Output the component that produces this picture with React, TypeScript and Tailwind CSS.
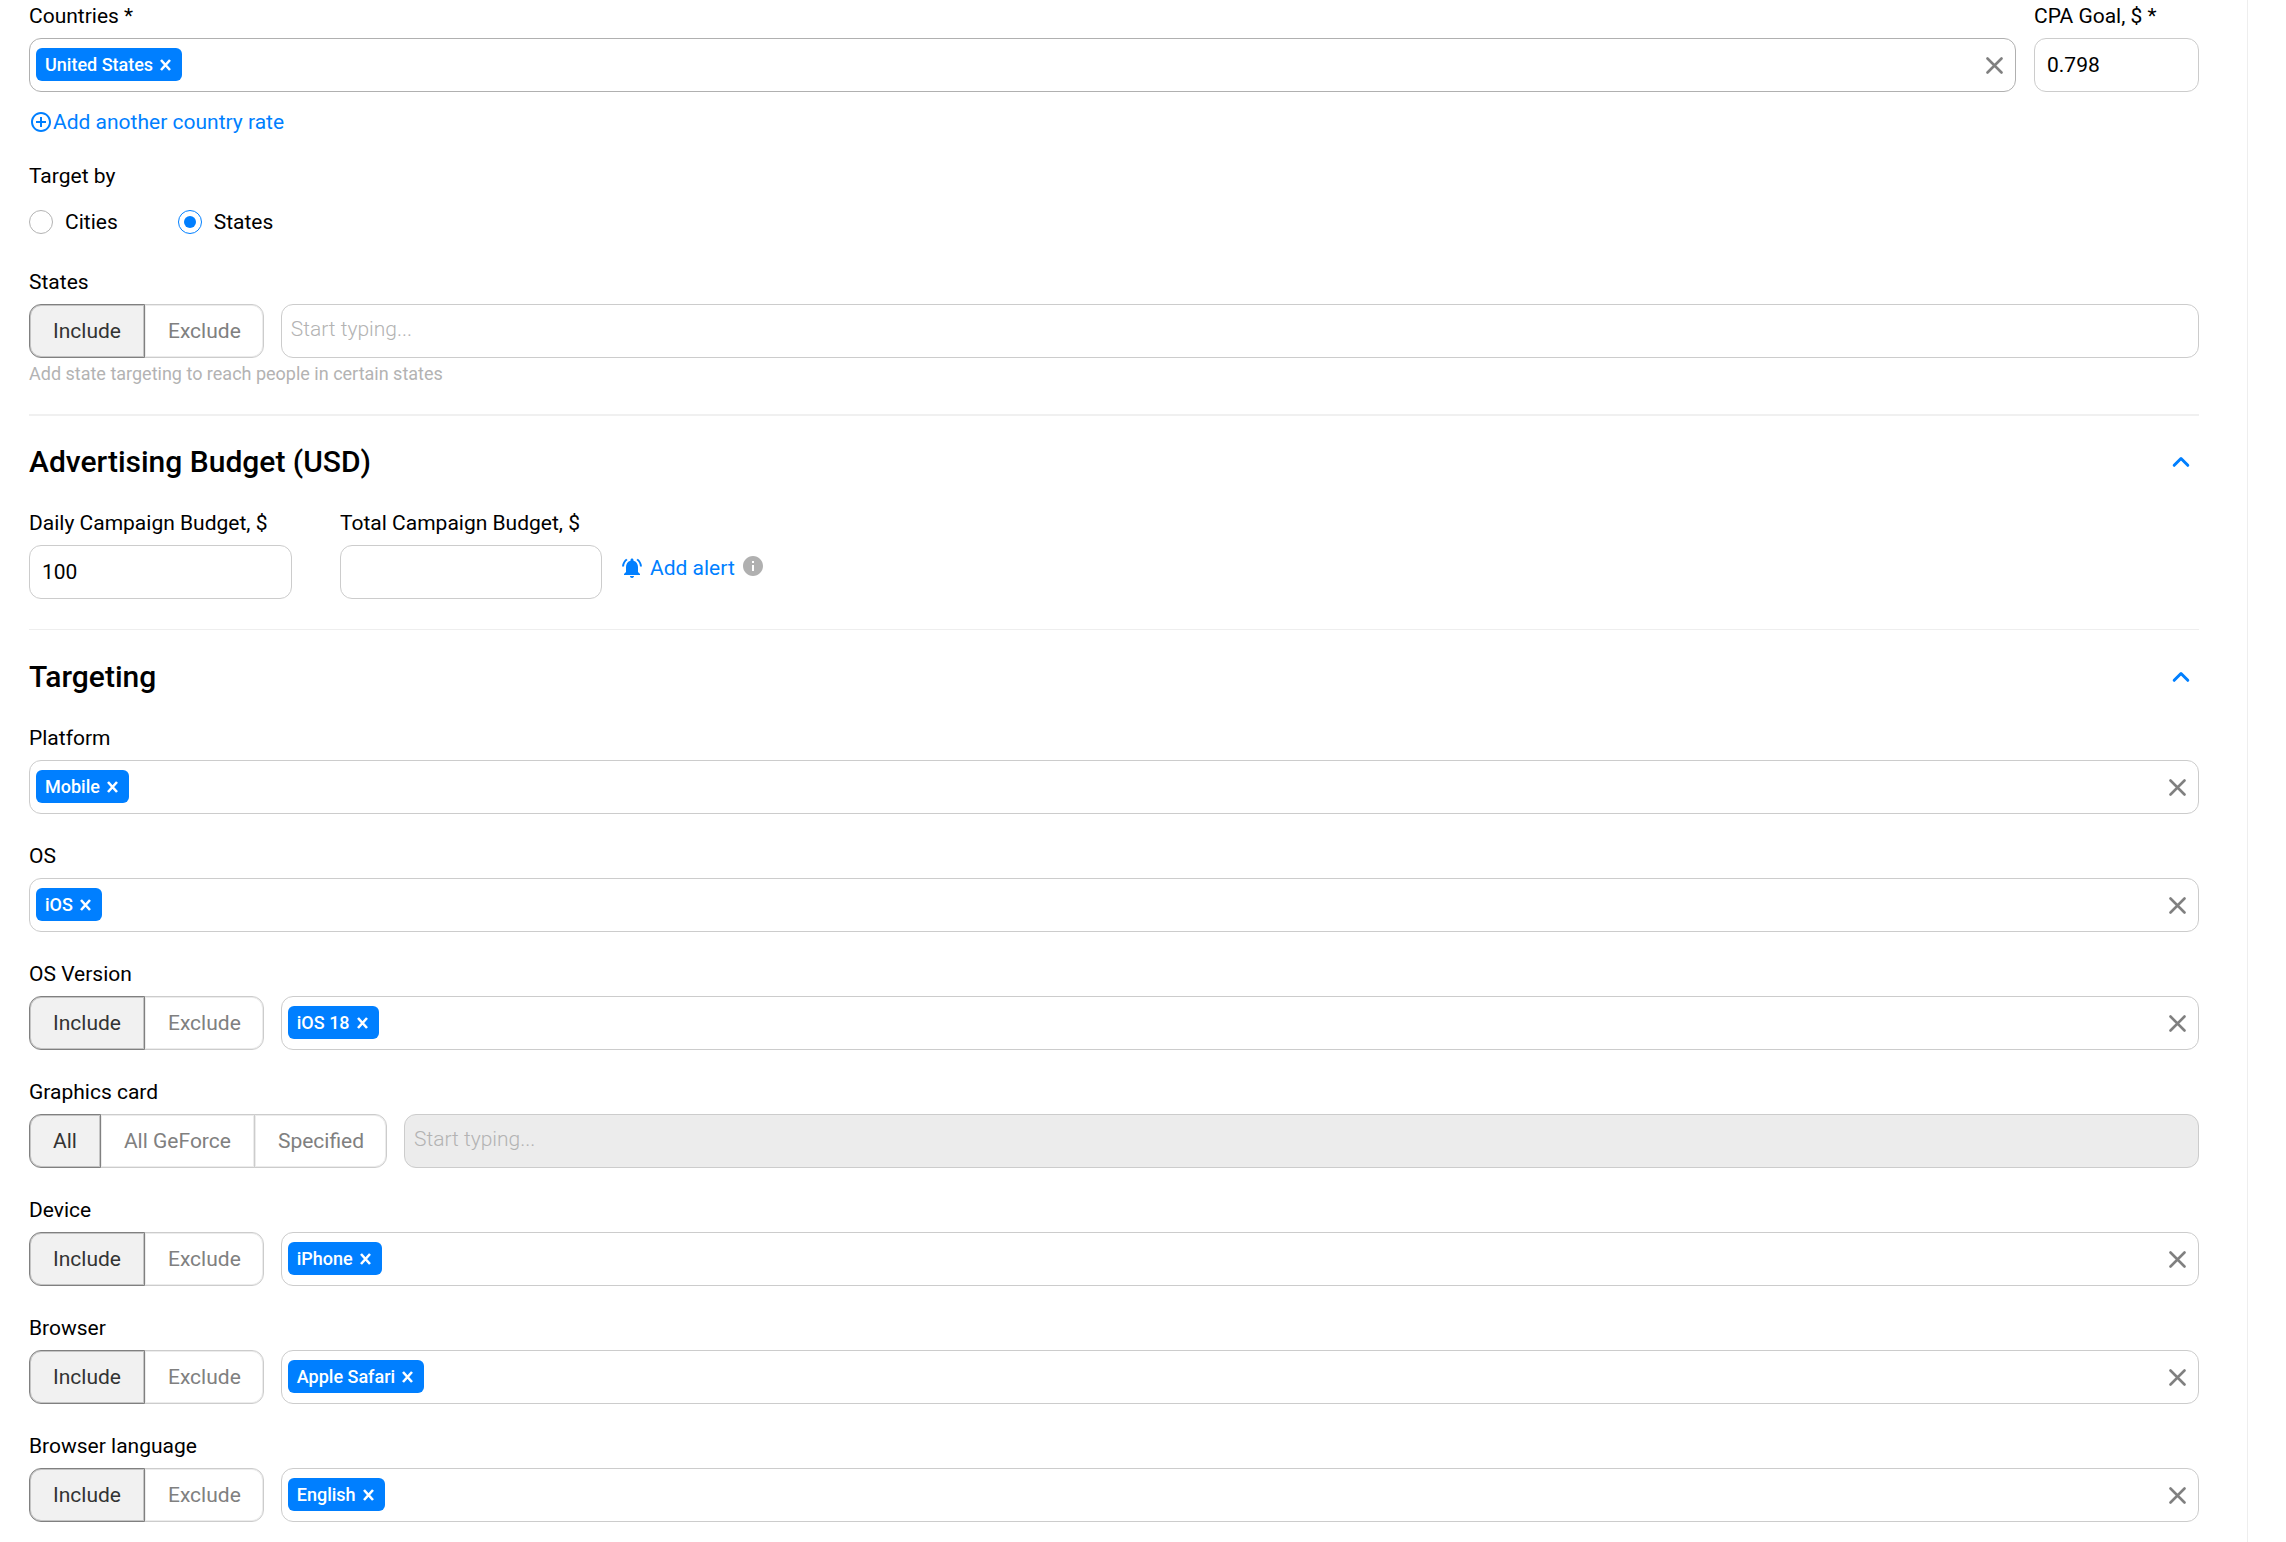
import React, { useState } from 'react';
import { MdAddCircleOutline, MdInfo, MdNotificationsActive } from 'react-icons/md';

const boxClass = 'h-[54px] rounded-xl border border-[#ccc] bg-white';

const ChevronUp: React.FC = () => (
  <svg width="18" height="12" viewBox="0 0 18 12" fill="none" stroke="#007fff" strokeWidth="3" strokeLinecap="round" strokeLinejoin="round">
    <path d="M2.2 9.3 9 2.5l6.8 6.8" />
  </svg>
);

const Chip: React.FC<{ label: string; onRemove: () => void }> = ({ label, onRemove }) => (
  <span className="flex h-[33px] shrink-0 items-center gap-[7px] rounded-md bg-[#007fff] pl-[9px] pr-[11px] text-[18px] font-medium leading-6 text-white">
    {label}
    <button type="button" aria-label={`Remove ${label}`} onClick={onRemove}>
      <svg width="11" height="12" viewBox="0 0 11 12" fill="none" stroke="currentColor" strokeWidth="2.6">
        <path d="M1 1l9 10M10 1 1 11" />
      </svg>
    </button>
  </span>
);

interface TagInputProps {
  id: string;
  tags?: string[];
  disabled?: boolean;
  focused?: boolean;
}

const TagInput: React.FC<TagInputProps> = ({ id, tags = [], disabled, focused }) => {
  const [items, setItems] = useState<string[]>(tags);

  if (items.length === 0) {
    return (
      <input
        id={id}
        type="text"
        disabled={disabled}
        placeholder="Start typing..."
        className="h-[54px] min-w-0 flex-1 rounded-xl border border-[#ccc] bg-white px-[9px] pb-1 placeholder:font-light placeholder:text-[#b3b3b3] disabled:bg-[#ececec]"
      />
    );
  }

  return (
    <div
      className={`flex h-[54px] min-w-0 flex-1 items-center rounded-xl border bg-white pl-[6px] pr-3 ${
        focused ? 'border-[#b0b0b0]' : 'border-[#ccc]'
      }`}
    >
      <div className="flex gap-2 pb-px">
        {items.map((item) => (
          <Chip key={item} label={item} onRemove={() => setItems(items.filter((i) => i !== item))} />
        ))}
      </div>
      <input id={id} type="text" className="h-10 min-w-0 flex-1 px-2 outline-none" />
      <button type="button" aria-label="Clear all" onClick={() => setItems([])}>
        <svg width="17" height="17" viewBox="0 0 17 17" fill="none" stroke="#808080" strokeWidth="2.6" strokeLinecap="round">
          <path d="M1.5 1.5l14 14M15.5 1.5l-14 14" />
        </svg>
      </button>
    </div>
  );
};

const Toggle: React.FC<{ options: string[]; label: string }> = ({ options, label }) => {
  const [selected, setSelected] = useState(options[0]);

  return (
    <div role="group" aria-label={label} className="flex shrink-0">
      {options.map((option) => (
        <button
          key={option}
          type="button"
          aria-pressed={option === selected}
          onClick={() => setSelected(option)}
          className={`-ml-px h-[54px] border px-[23px] first:ml-0 first:rounded-l-xl last:rounded-r-xl last:pr-[22px] ${
            option === selected
              ? 'z-10 border-[#808080] bg-[#f1f1f1] text-[#333] shadow-[inset_0_0_0_1px_#c4c4c4]'
              : 'border-[#ccc] bg-white text-[#808080] shadow-[inset_0_0_0_1px_#ececec]'
          }`}
        >
          {option}
        </button>
      ))}
    </div>
  );
};

interface FieldProps {
  id: string;
  label: string;
  className?: string;
  children: React.ReactNode;
}

const Field: React.FC<FieldProps> = ({ id, label, className = '', children }) => (
  <div className={`flex flex-col gap-[10px] ${className}`}>
    <label htmlFor={id} className="self-start">
      {label}
    </label>
    <div className="flex gap-[17px]">{children}</div>
  </div>
);

const SectionHeader: React.FC<{ title: string; open: boolean; onToggle: () => void }> = ({ title, open, onToggle }) => (
  <div className="flex items-center justify-between pr-[9px]">
    <h2 className="text-[30px] font-medium leading-8">{title}</h2>
    <button type="button" aria-label={title} aria-expanded={open} onClick={onToggle} className={open ? '' : 'rotate-180'}>
      <ChevronUp />
    </button>
  </div>
);

const radioClass =
  "grid size-6 appearance-none place-content-center rounded-full border border-[#b3b3b3] before:size-3 before:rounded-full checked:border-[#007fff] checked:before:bg-[#007fff] before:content-['']";

const includeExclude = ['Include', 'Exclude'];

const targetingFields = [
  { id: 'platform', label: 'Platform', options: [], tags: ['Mobile'] },
  { id: 'os', label: 'OS', options: [], tags: ['iOS'] },
  { id: 'os-version', label: 'OS Version', options: includeExclude, tags: ['iOS 18'] },
  { id: 'graphics-card', label: 'Graphics card', options: ['All', 'All GeForce', 'Specified'], tags: [], disabled: true },
  { id: 'device', label: 'Device', options: includeExclude, tags: ['iPhone'] },
  { id: 'browser', label: 'Browser', options: includeExclude, tags: ['Apple Safari'] },
  { id: 'browser-language', label: 'Browser language', options: includeExclude, tags: ['English'] },
];

const App: React.FC = () => {
  const [targetBy, setTargetBy] = useState('States');
  const [budgetOpen, setBudgetOpen] = useState(true);
  const [targetingOpen, setTargetingOpen] = useState(true);

  return (
    <div className="min-h-screen bg-white font-['Roboto',sans-serif] text-[21px] leading-6 text-black">
      <form className="mr-[38px] min-h-screen border-r border-[#eee] pb-5 pl-[29px] pr-12 pt-1">
        <div className="flex gap-[18px]">
          <Field id="countries" label="Countries *" className="flex-1">
            <TagInput id="countries" tags={['United States']} focused />
          </Field>
          <Field id="cpa" label="CPA Goal, $ *" className="w-[165px]">
            <input id="cpa" type="text" defaultValue="0.798" className={`${boxClass} w-full px-3`} />
          </Field>
        </div>

        <a href="#" className="mt-[18px] flex w-fit items-center text-[#007fff]">
          <MdAddCircleOutline size={24} />
          Add another country rate
        </a>

        <fieldset className="mt-[30px]">
          <legend>Target by</legend>
          <div className="mt-[22px] flex gap-[60px]">
            {['Cities', 'States'].map((option) => (
              <label key={option} className="flex items-center gap-3">
                <input
                  type="radio"
                  name="target-by"
                  checked={targetBy === option}
                  onChange={() => setTargetBy(option)}
                  className={radioClass}
                />
                {option}
              </label>
            ))}
          </div>
        </fieldset>

        <Field id="states" label="States" className="mt-9">
          <Toggle options={includeExclude} label="States" />
          <TagInput id="states" />
        </Field>
        <p className="mt-[6px] text-[18px] leading-5 text-[#b3b3b3]">Add state targeting to reach people in certain states</p>

        <section className="mt-[30px] border-t-2 border-[#f0f0f0] pt-[30px]">
          <SectionHeader title="Advertising Budget (USD)" open={budgetOpen} onToggle={() => setBudgetOpen(!budgetOpen)} />
          {budgetOpen && (
            <div className="mt-[33px] flex items-end">
              <Field id="daily-budget" label="Daily Campaign Budget, $" className="w-[263px]">
                <input id="daily-budget" type="text" defaultValue="100" className={`${boxClass} w-full px-3`} />
              </Field>
              <Field id="total-budget" label="Total Campaign Budget, $" className="ml-12 w-[262px]">
                <input id="total-budget" type="text" className={`${boxClass} w-full px-3`} />
              </Field>
              <div className="mb-[18px] ml-[18px] flex items-center gap-[6px]">
                <button type="button" className="flex items-center gap-[6px] text-[#007fff]">
                  <MdNotificationsActive size={24} />
                  Add alert
                </button>
                <MdInfo size={24} className="mb-[3px] text-[#b0b0b0]" />
              </div>
            </div>
          )}
        </section>

        <section className="mt-[30px] border-t border-[#eee] pt-[31px]">
          <SectionHeader title="Targeting" open={targetingOpen} onToggle={() => setTargetingOpen(!targetingOpen)} />
          {targetingOpen && (
            <div className="mt-[33px] flex flex-col gap-[30px]">
              {targetingFields.map((field) => (
                <Field key={field.id} id={field.id} label={field.label}>
                  {field.options.length > 0 && <Toggle options={field.options} label={field.label} />}
                  <TagInput id={field.id} tags={field.tags} disabled={field.disabled} />
                </Field>
              ))}
            </div>
          )}
        </section>
      </form>
    </div>
  );
};

export default App;
